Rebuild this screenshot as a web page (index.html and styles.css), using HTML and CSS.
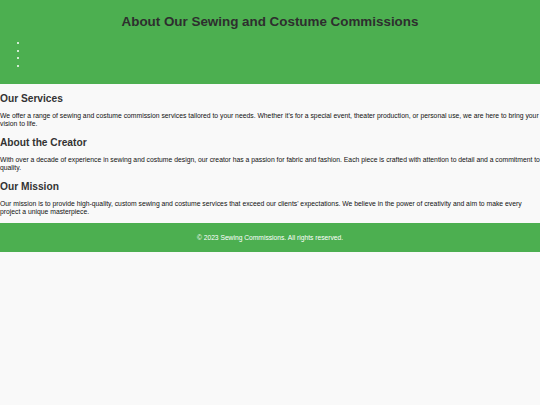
FILE: index.html
```html
<!DOCTYPE html>
<html lang="en">
<head>
<meta charset="utf-8">
<title>About Our Sewing and Costume Commissions</title>
<link rel="stylesheet" href="styles.css">
</head>
<body>
<header class="site-header">
  <h1 class="site-title">About Our Sewing and Costume Commissions</h1>
  <nav class="site-nav">
    <ul class="nav-list">
      <li class="nav-item"></li>
      <li class="nav-item"></li>
      <li class="nav-item"></li>
      <li class="nav-item"></li>
    </ul>
  </nav>
</header>
<main class="content">
  <section class="block">
    <h2 class="block-title">Our Services</h2>
    <p class="block-text">We offer a range of sewing and costume commission services tailored to your needs. Whether it's for a special event, theater production, or personal use, we are here to bring your vision to life.</p>
  </section>
  <section class="block">
    <h2 class="block-title">About the Creator</h2>
    <p class="block-text">With over a decade of experience in sewing and costume design, our creator has a passion for fabric and fashion. Each piece is crafted with attention to detail and a commitment to quality.</p>
  </section>
  <section class="block">
    <h2 class="block-title">Our Mission</h2>
    <p class="block-text">Our mission is to provide high-quality, custom sewing and costume services that exceed our clients' expectations. We believe in the power of creativity and aim to make every project a unique masterpiece.</p>
  </section>
</main>
<footer class="site-footer">
  <p class="footer-text">&copy; 2023 Sewing Commissions. All rights reserved.</p>
</footer>
</body>
</html>
```
FILE: styles.css
```css
html, body {
  margin: 0;
  padding: 0;
}
body {
  background: #f9f9f9;
  font-family: "Liberation Sans", Arial, sans-serif;
  color: #000;
}
.site-header {
  background: #4caf50;
  padding: 13px 0 15px;
}
.site-title {
  margin: 0;
  text-align: center;
  font-size: 13.4px;
  line-height: 18px;
  color: #2e2e2e;
  font-weight: bold;
}
.site-nav {
  margin-top: 8px;
}
.nav-list {
  margin: 0;
  padding-left: 27px;
  color: #fff;
  font-size: 5px;
}
.nav-item {
  min-height: 7.5px;
  line-height: 7.5px;
}
.content {
  padding: 0;
}
.block-title {
  margin: 8px 0 7px;
  font-size: 10.2px;
  line-height: 13px;
  color: #333;
}
.block-text {
  margin: 6.5px 0;
  font-size: 6.8px;
  line-height: 8px;
  color: #111;
}
.site-footer {
  background: #4caf50;
  height: 29px;
  display: flex;
  align-items: center;
  justify-content: center;
}
.footer-text {
  margin: 0;
  color: #fff;
  font-size: 6.7px;
}
```
